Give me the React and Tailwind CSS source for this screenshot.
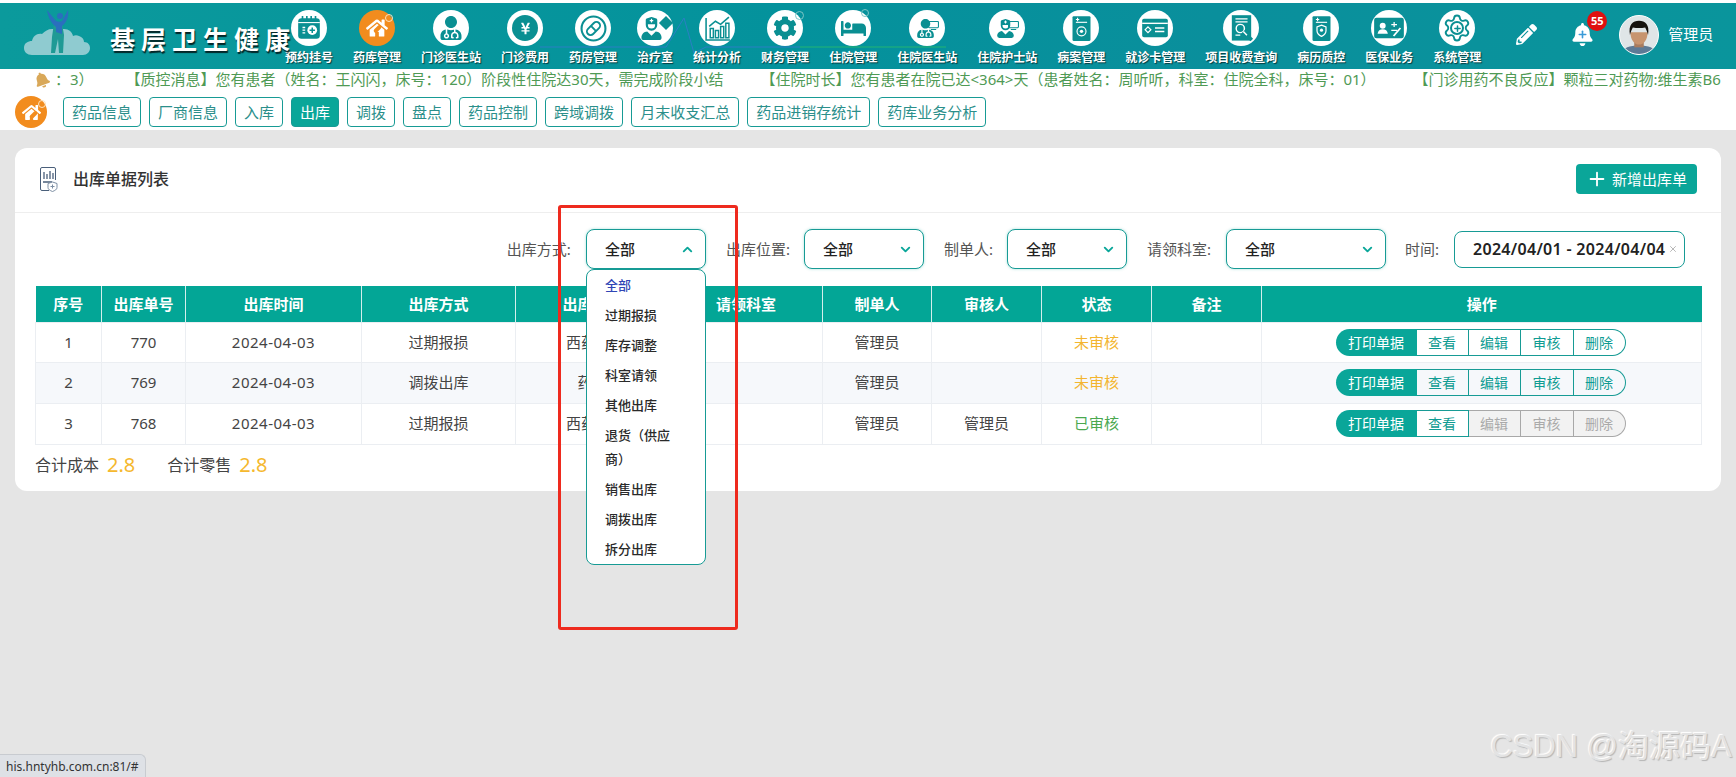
import { Plus, ChevronDown, ChevronUp, X, Settings } from "lucide-react";
import { FaUserMd, FaUserNurse, FaCog, FaBed, FaBell, FaPencilAlt, FaHome, FaYenSign } from "react-icons/fa";

const teal = "#0a8f92";

// small teal screen next to the doctor / nurse figures
const Screen = () => (
  <svg viewBox="0 0 12 10" className="absolute left-[19px] top-[11px] w-[11px] h-[9px]">
    <rect x="0.5" y="0.5" width="11" height="7" rx="1" fill="none" stroke={teal} strokeWidth="1.2" />
    <path d="M3 9.5h6" stroke={teal} strokeWidth="1.2" />
  </svg>
);

const HouseIcon = ({ size = 22 }) => (
  <div className="relative flex items-center justify-center">
    <FaHome size={size} color="#fff" />
    <span className="absolute left-[7px] top-[10px] w-[9px] h-[4px] rounded-full bg-[#f28c1e] -rotate-45" />
    <span className="absolute -right-[5px] -top-[3px] w-[8px] h-[8px] rounded-full border border-[#fde2bd]" />
  </div>
);

const icons = {
  calendar: (
    <svg viewBox="0 0 24 24" className="w-[26px] h-[26px]">
      <rect x="2" y="3" width="20" height="19" rx="3" fill={teal} />
      <path d="M6 1v4M10 1v4M14 1v4M18 1v4" stroke={teal} strokeWidth="1.500" />
      <path d="M2 7h20" stroke="#fff" strokeWidth="1" />
      <circle cx="15" cy="14" r="4.500" fill="#fff" />
      <path d="M15 11.500v5M12.500 14h5" stroke={teal} strokeWidth="1.400" />
      <path d="M6 11.500h2.500M6 14h2.500M6 16.500h2.500" stroke="#fff" strokeWidth="1.300" />
    </svg>
  ),
  house: <HouseIcon />,
  doctor: <FaUserMd size={24} color={teal} />,
  yen: (
    <div className="w-[26px] h-[26px] rounded-full flex items-center justify-center bg-[#0a8f92]">
      <FaYenSign size={13} color="#fff" />
    </div>
  ),
  pill: (
    <svg viewBox="0 0 26 26" className="w-[27px] h-[27px]">
      <circle cx="13" cy="13" r="11.500" fill="none" stroke={teal} strokeWidth="2" />
      <g transform="rotate(-45 13 13)">
        <rect x="5.500" y="9.500" width="15" height="7" rx="3.500" fill="none" stroke={teal} strokeWidth="1.800" />
        <path d="M13 9.500v7" stroke={teal} strokeWidth="1.800" />
      </g>
    </svg>
  ),
  nurse: (
    <div className="relative flex">
      <FaUserNurse size={23} color={teal} className="-ml-[7px]" />
      <span className="absolute -right-[8px] top-[1px] w-[10px] h-[10px] rotate-45 bg-[#0a8f92]" />
    </div>
  ),
  chart: (
    <svg viewBox="0 0 26 26" className="w-[27px] h-[27px]">
      <path d="M2 3v21h23" fill="none" stroke={teal} strokeWidth="1.500" />
      <path d="M6 22V13h3v9zM11 22V15h3v7zM16 22V11h3v11zM21 22V8h3v14z" fill="none" stroke={teal} strokeWidth="1.400" />
      <path d="M5 11l6-5 5 3 8-7" fill="none" stroke={teal} strokeWidth="1.500" />
    </svg>
  ),
  money: (
    <div className="relative flex items-center justify-center">
      <FaCog size={24} color={teal} />
      <span className="absolute text-[9px] font-bold text-white">¥</span>
      <span className="absolute -right-[7px] -top-[5px] w-[9px] h-[9px] rounded-full border border-[#7cc5c5]" />
    </div>
  ),
  bed: (
    <div className="relative flex items-center justify-center">
      <FaBed size={25} color={teal} />
      <span className="absolute -right-[3px] -top-[7px] w-[8px] h-[8px] rounded-full border border-[#7cc5c5]" />
    </div>
  ),
  wardDoctor: (
    <div className="relative w-[36px] h-[36px] flex items-center pl-[7px]">
      <FaUserMd size={19} color={teal} />
      <Screen />
    </div>
  ),
  wardNurse: (
    <div className="relative w-[36px] h-[36px] flex items-center pl-[7px]">
      <FaUserNurse size={19} color={teal} />
      <Screen />
    </div>
  ),
  record: (
    <svg viewBox="0 0 24 24" className="w-[27px] h-[27px]">
      <rect x="4" y="1" width="16" height="22" rx="1" fill={teal} />
      <path d="M7 6.500h10" stroke="#fff" strokeWidth="1" />
      <path d="M7 4h3M8.500 2.500v3" stroke="#fff" strokeWidth="1" />
      <circle cx="12" cy="14.500" r="4" fill="none" stroke="#fff" strokeWidth="1" />
      <circle cx="12" cy="14.500" r="1.500" fill="#fff" />
    </svg>
  ),
  card: (
    <svg viewBox="0 0 24 24" className="w-[28px] h-[28px]">
      <rect x="1" y="4" width="22" height="16" rx="1.500" fill={teal} />
      <path d="M1 8h22" stroke="#fff" strokeWidth="1.200" />
      <path d="M6 11l2.500 2.500L6 16l-2.500-2.500z" fill="none" stroke="#fff" strokeWidth="1" />
      <path d="M12 12h8M12 15h8" stroke="#fff" strokeWidth="1.200" />
    </svg>
  ),
  query: (
    <svg viewBox="0 0 24 24" className="w-[29px] h-[29px]">
      <rect x="4" y="1" width="16" height="21" fill={teal} />
      <path d="M7 4h10M7 6.500h10M7 17.500h4" stroke="#fff" strokeWidth="1" />
      <circle cx="11" cy="12" r="3.400" fill="none" stroke="#fff" strokeWidth="1.200" />
      <path d="M13.500 14.500l7 7" stroke={teal} strokeWidth="3" />
      <path d="M13.500 14.500l3 3" stroke="#fff" strokeWidth="1.200" />
    </svg>
  ),
  quality: (
    <svg viewBox="0 0 24 24" className="w-[27px] h-[27px]">
      <rect x="4" y="1" width="16" height="22" rx="1" fill={teal} />
      <path d="M7 6.500h10" stroke="#fff" strokeWidth="1" />
      <path d="M7 4h3M8.500 2.500v3" stroke="#fff" strokeWidth="1" />
      <path d="M12 9l4 1.500v3.500c0 2.500-2 4-4 5-2-1-4-2.500-4-5v-3.500z" fill="none" stroke="#fff" strokeWidth="1.100" />
      <circle cx="12" cy="13.500" r="1.400" fill="#fff" />
    </svg>
  ),
  insurance: (
    <svg viewBox="0 0 28 24" className="w-[32px] h-[28px]">
      <rect x="1" y="3" width="26" height="18" rx="2" fill={teal} />
      <circle cx="8.500" cy="10" r="2.600" fill="#fff" />
      <path d="M4 17c.5-3 2-4 4.500-4s4 1 4.500 4z" fill="#fff" />
      <path d="M16 9h5M18.500 6.800v4.400M16 14h5" stroke="#fff" strokeWidth="1.100" />
      <path d="M18 19l6-7" stroke="#fff" strokeWidth="1.600" />
    </svg>
  ),
  system: (
    <div className="relative flex items-center justify-center">
      <Settings size={30} color={teal} strokeWidth={1.500} />
      <span className="absolute w-[14px] h-[14px] rounded-full border-2 border-[#0a8f92] bg-white flex items-center justify-center">
        <Plus size={9} color={teal} strokeWidth={4} />
      </span>
    </div>
  ),
};

const navItems = [
  ["预约挂号", "calendar"],
  ["药库管理", "house", true],
  ["门诊医生站", "doctor"],
  ["门诊费用", "yen"],
  ["药房管理", "pill"],
  ["治疗室", "nurse"],
  ["统计分析", "chart"],
  ["财务管理", "money"],
  ["住院管理", "bed"],
  ["住院医生站", "wardDoctor"],
  ["住院护士站", "wardNurse"],
  ["病案管理", "record"],
  ["就诊卡管理", "card"],
  ["项目收费查询", "query"],
  ["病历质控", "quality"],
  ["医保业务", "insurance"],
  ["系统管理", "system"],
];

const subTabs = ["药品信息", "厂商信息", "入库", "出库", "调拨", "盘点", "药品控制", "跨域调拨", "月末收支汇总", "药品进销存统计", "药库业务分析"];

const options = ["全部", "过期报损", "库存调整", "科室请领", "其他出库", "退货（供应商）", "销售出库", "调拨出库", "拆分出库"];

const columns = [
  ["序号", "w-[66px]"],
  ["出库单号", "w-[84px]"],
  ["出库时间", "w-[176px]"],
  ["出库方式", "w-[154px]"],
  ["出库位置", "w-[154px]"],
  ["请领科室", "w-[153px]"],
  ["制单人", "w-[109px]"],
  ["审核人", "w-[110px]"],
  ["状态", "w-[110px]"],
  ["备注", "w-[110px]"],
  ["操作", "w-[440px]"],
];

const rows = [
  { no: 1, id: 770, way: "过期报损", place: "西药库", checker: "", status: "未审核" },
  { no: 2, id: 769, way: "调拨出库", place: "药库", checker: "", status: "未审核" },
  { no: 3, id: 768, way: "过期报损", place: "西药库", checker: "管理员", status: "已审核" },
];

function Logo() {
  return (
    <div className="relative w-[285px] h-full shrink-0">
      <svg viewBox="0 0 68 46" className="absolute left-[23px] top-[6px] w-[68px] h-[46px]">
        <path d="M9 46c-5 0-8-3-8-7 0-5 4-7 8-7 1-5 5-8 10-7 3-3 6-5 10-5h12c5 0 8 3 9 7 2-1 4-1 6 0 3 1 5 3 5 6 4 0 6 3 6 6 0 4-3 7-7 7z" fill="#8fcbd0" />
        <path d="M31 14c3 2 6 2 8 0l2 12-1 18h-4l-1-14-3 14h-4l1-16z" fill="#1f9a95" />
        <path d="M24 1l9 11c2 1 4 1 6 0l6-11c1 6-1 12-6 16v8l-6-2v-5C28 14 25 8 24 1z" fill="#2a6fbe" />
        <circle cx="37" cy="7" r="3" fill="#2a6fbe" />
      </svg>
      <div className="absolute left-[110px] top-[17px] z-10 whitespace-nowrap text-[25px] leading-[38px] font-bold tracking-[6px] text-white [text-shadow:1px_2px_1px_rgba(0,0,0,.75)]">
        基层卫生健康
      </div>
    </div>
  );
}

function Header() {
  return (
    <header className="relative flex h-[66px] bg-[linear-gradient(90deg,#0b9a9c,#04929c_45%,#0a8f9c_70%,#0a959c)]">
      {/* heartbeat line behind the menu */}
      <svg viewBox="0 0 410 46" className="absolute left-[540px] top-[10px] w-[410px] h-[46px]">
        <path d="M0 34h126l18-29 10 35 12-6h94" fill="none" stroke="#2b7fc4" strokeWidth="1" />
        <path d="M260 34h146" fill="none" stroke="#22b573" strokeWidth="1.200" />
      </svg>
      <Logo />
      <nav className="relative flex gap-5">
        {navItems.map(([label, icon, active]) => (
          <div key={label} className="flex flex-col items-center pt-[7px]">
            <div className={`w-[36px] h-[36px] rounded-full flex items-center justify-center overflow-visible ${active ? "bg-[#f28c1e]" : "bg-white"}`}>
              {icons[icon]}
            </div>
            <div className="mt-[3px] text-[12px] leading-[18px] font-bold whitespace-nowrap text-white [text-shadow:1px_1px_1px_rgba(0,0,0,.6)]">
              {label}
            </div>
          </div>
        ))}
      </nav>
      <div className="relative flex-1 flex items-center pl-[35px] pb-[3px]">
        <FaPencilAlt size={21} color="#fff" />
        <div className="relative ml-[34px]">
          <FaBell size={23} color="#fff" />
          <Plus size={11} color="#3b9bd8" strokeWidth={3.500} className="absolute left-[6px] top-[6px]" />
          <span className="absolute -right-[13px] -top-[12px] w-[20px] h-[20px] rounded-full bg-[#e01010] text-white text-[11px] leading-[20px] font-bold text-center">55</span>
        </div>
        <svg viewBox="0 0 40 40" className="ml-[25px] w-[40px] h-[40px] rounded-full border border-white bg-[#dfe5e7]">
          <path d="M2 40c1-7 8-9 18-9s17 2 18 9z" fill="#5d7a96" />
          <rect x="15" y="25" width="10" height="8" fill="#a87b5e" />
          <path d="M11 17c0 8 4 13 9 13s9-5 9-13z" fill="#c7946f" />
          <path d="M10.500 20c-2-11 3-15 9.500-15s11.500 4 9.500 15c-1-4-2-6-3-8-4 1-9 1-13 0-1 2-2 4-3 8z" fill="#16130f" />
        </svg>
        <span className="ml-[9px] text-[15px] text-white whitespace-nowrap">管理员</span>
      </div>
    </header>
  );
}

function Ticker() {
  return (
    <div className="flex items-center h-[22px] pb-[1px] pl-[34px] overflow-hidden whitespace-nowrap text-[15px] text-[#4f9a55]">
      <FaBell size={16} color="#d9a859" className="-rotate-[20deg] shrink-0" />
      <span className="ml-[5px]">：3）</span>
      <span className="ml-[32px]">【质控消息】您有患者（姓名：王闪闪，床号：120）阶段性住院达30天，需完成阶段小结</span>
      <span className="ml-[37px]">【住院时长】您有患者在院已达&lt;364&gt;天（患者姓名：周听听，科室：住院全科，床号：01）</span>
      <span className="ml-[38px]">【门诊用药不良反应】颗粒三对药物:维生素B6</span>
    </div>
  );
}

function SubNav() {
  return (
    <div className="flex items-center gap-2 h-[39px] pt-[6px] pb-[3px] pl-[15px]">
      <div className="w-[32px] h-[32px] mr-2 rounded-full bg-[#f28c1e] flex items-center justify-center">
        <HouseIcon size={19} />
      </div>
      {subTabs.map((tab) => (
        <button
          key={tab}
          className={`h-[30px] px-[8px] rounded border border-[#179b95] text-[15px] whitespace-nowrap ${
            tab === "出库" ? "bg-[#0aa699] text-white" : "bg-white text-[#2b8f8b]"
          }`}
        >
          {tab}
        </button>
      ))}
    </div>
  );
}

function Select({ width, open }) {
  return (
    <div className={`relative h-[40px] ${width} flex items-center justify-between pl-[18px] pr-[10px] rounded-lg border border-[#179b95] bg-white shadow-[0_0_3px_rgba(10,166,153,.35)]`}>
      <span className="text-[15px] font-medium text-[#222]">全部</span>
      {open ? <ChevronUp size={15} color="#0aa699" strokeWidth={3} /> : <ChevronDown size={15} color="#0aa699" strokeWidth={3} />}
      {open && (
        <ul className="absolute left-[-1px] top-[39px] z-20 w-[120px] py-0 rounded-lg border border-[#179b95] bg-white">
          {options.map((o, i) => (
            <li key={o} className={`pl-[18px] pr-[24px] py-[3px] text-[13px] leading-[24px] font-medium ${i === 0 ? "text-[#2f45b5]" : "text-[#2a2a2a]"}`}>
              {o}
            </li>
          ))}
        </ul>
      )}
    </div>
  );
}

function Filters() {
  return (
    <div className="flex items-center justify-end pt-[16px] pb-[17px] pr-[36px] text-[15px] text-[#555]">
      <span>出库方式:</span>
      <div className="ml-[15px]"><Select width="w-[120px]" open /></div>
      <span className="ml-[20px]">出库位置:</span>
      <div className="ml-[14px]"><Select width="w-[120px]" /></div>
      <span className="ml-[20px]">制单人:</span>
      <div className="ml-[14px]"><Select width="w-[120px]" /></div>
      <span className="ml-[20px]">请领科室:</span>
      <div className="ml-[15px]"><Select width="w-[160px]" /></div>
      <span className="ml-[19px]">时间:</span>
      <div className="ml-[15px] h-[37px] w-[231px] flex items-center pl-[18px] rounded-lg border border-[#179b95] bg-white">
        <span className="text-[16px] font-semibold text-[#222] whitespace-nowrap tracking-[0.3px]">2024/04/01 - 2024/04/04</span>
        <X size={10} color="#aaa" className="ml-[3px] shrink-0" />
      </div>
    </div>
  );
}

function Actions({ locked }) {
  const btn = "h-full w-[52px] flex items-center justify-center border-y border-r";
  const live = "border-[#179b95] text-[#0f9c93]";
  const dead = "border-[#a8a8a8] bg-[#f2f2f2] text-[#aaa]";
  return (
    <div className="inline-flex h-[27px] align-middle text-[14px]">
      <span className="h-full w-[81px] flex items-center justify-center rounded-l-full bg-[#0aa699] text-white">打印单据</span>
      <span className={`${btn} ${live}`}>查看</span>
      <span className={`${btn} ${locked ? dead : live}`}>编辑</span>
      <span className={`${btn} w-[53px] ${locked ? dead : live}`}>审核</span>
      <span className={`${btn} rounded-r-full ${locked ? dead : live}`}>删除</span>
    </div>
  );
}

function DataTable() {
  return (
    <table className="w-[1666px] ml-[20px] table-fixed border-collapse text-[15px] text-center text-[#444]">
      <colgroup>
        {columns.map(([name, w]) => <col key={name} className={w} />)}
      </colgroup>
      <thead>
        <tr className="h-[36px] bg-[#03a696] text-white">
          {columns.map(([name]) => (
            <th key={name} className="border-r border-[#d5efec] last:border-r-0 font-bold">{name}</th>
          ))}
        </tr>
      </thead>
      <tbody>
        {rows.map((r, i) => (
          <tr key={r.id} className={`${i === 0 ? "h-[40px]" : "h-[41px]"} ${i === 1 ? "bg-[#f6f8fb]" : "bg-white"}`}>
            <td className="border border-[#ebeef2]">{r.no}</td>
            <td className="border border-[#ebeef2]">{r.id}</td>
            <td className="border border-[#ebeef2] tracking-[0.5px]">2024-04-03</td>
            <td className="border border-[#ebeef2]">{r.way}</td>
            <td className={`border border-[#ebeef2] ${r.place === "西药库" ? "pr-[8px]" : ""}`}>{r.place}</td>
            <td className="border border-[#ebeef2]"></td>
            <td className="border border-[#ebeef2]">管理员</td>
            <td className="border border-[#ebeef2]">{r.checker}</td>
            <td className={`border border-[#ebeef2] ${r.status === "已审核" ? "text-[#4aa84f]" : "text-[#f3b52f]"}`}>{r.status}</td>
            <td className="border border-[#ebeef2]"></td>
            <td className="border border-[#ebeef2] pr-[2px]"><Actions locked={r.status === "已审核"} /></td>
          </tr>
        ))}
      </tbody>
    </table>
  );
}

function Card() {
  return (
    <section className="h-[343px] rounded-xl bg-white">
      <div className="flex items-center justify-between h-[65px] pl-[25px] pr-[24px] pb-[2px] border-b border-[#eeeeee]">
        <div className="flex items-center gap-[15px]">
          <svg viewBox="0 0 18 25" className="w-[18px] h-[25px]">
            <path d="M2 .5h12a1.500 1.500 0 0 1 1.500 1.500v11M9 23.500H2A1.500 1.500 0 0 1 .5 22V2A1.500 1.500 0 0 1 2 .500" fill="none" stroke="#4a5f7a" strokeWidth="1" />
            <path d="M4 5v7M7 7v5M10 4v8M13 6v6M3 15h9" stroke="#4a5f7a" strokeWidth="1.300" />
            <path d="M12.500 15l4.500 1.500v4c0 2-2 3-4.500 4-2.500-1-4.500-2-4.500-4v-4z" fill="#fff" stroke="#7d8ea3" strokeWidth="1" />
            <path d="M12.500 17.500v4M10.500 19.500h4" stroke="#7d8ea3" strokeWidth="1" />
          </svg>
          <h2 className="text-[16px] font-medium text-[#333]">出库单据列表</h2>
        </div>
        <button className="h-[30px] w-[121px] flex items-center justify-center gap-[4px] rounded bg-[#0aa699] text-[15px] text-white">
          <Plus size={22} strokeWidth={2} />
          新增出库单
        </button>
      </div>
      <Filters />
      <DataTable />
      <div className="flex items-center gap-2 h-[44px] pl-[20px] pb-[4px] text-[16px] text-[#444]">
        <span>合计成本</span>
        <span className="text-[20px] text-[#f5b82e]">2.8</span>
        <span className="ml-[24px]">合计零售</span>
        <span className="text-[20px] text-[#f5b82e]">2.8</span>
      </div>
    </section>
  );
}

export default function App() {
  return (
    <div className="relative h-[777px] overflow-hidden bg-[#e5e5e5] font-['Noto_Sans','Noto_Sans_CJK_SC',sans-serif]">
      <div className="pt-[3px] bg-white">
        <Header />
        <Ticker />
        <SubNav />
      </div>
      <main className="px-[15px] pt-[18px]">
        <Card />
      </main>
      {/* annotation drawn on top of the page */}
      <div className="absolute left-[558px] top-[205px] z-30 w-[180px] h-[425px] border-[3px] border-[#ee2a1e] rounded-[3px] pointer-events-none" />
      <div className="absolute left-0 bottom-0 w-[146px] h-[23px] pl-[6px] rounded-tr-md border-t border-r border-[#c8cbd0] bg-[#dee1e6] text-[12px] leading-[23px] text-[#333]">
        his.hntyhb.com.cn:81/#
      </div>
      <div className="absolute right-[4px] bottom-[12px] font-['Liberation_Sans','Noto_Sans_CJK_SC',sans-serif] text-[31px] leading-[36px] whitespace-nowrap text-[#e3e3e3] [text-shadow:-1px_-1px_1px_#fff,1px_1px_1px_#b5b5b5]">
        CSDN @淘源码A
      </div>
    </div>
  );
}
